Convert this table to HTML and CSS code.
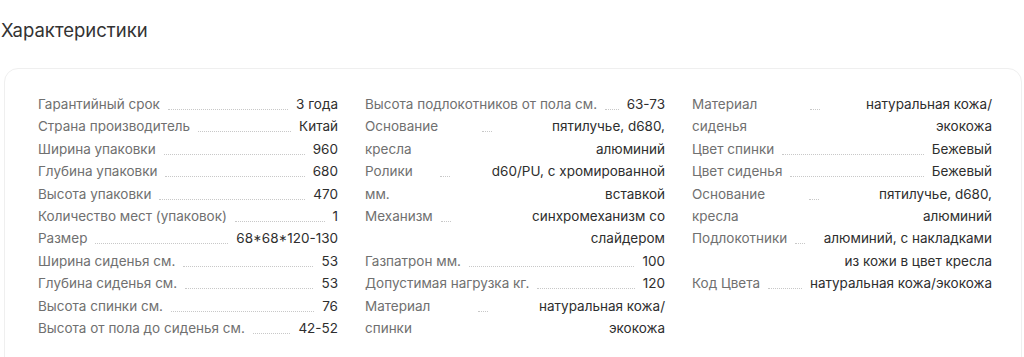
FILE: index.html
```html
<!DOCTYPE html>
<html lang="ru">
<head>
<meta charset="utf-8">
<link rel="stylesheet" href="styles.css">
</head>
<body>
<div class="page">
  <h2 class="title">Характеристики</h2>
  <div class="card">
    <div class="col">
      <div class="row"><span class="name">Гарантийный срок</span><span class="dots"></span><span class="val">3 года</span></div>
      <div class="row"><span class="name">Страна производитель</span><span class="dots"></span><span class="val">Китай</span></div>
      <div class="row"><span class="name">Ширина упаковки</span><span class="dots"></span><span class="val">960</span></div>
      <div class="row"><span class="name">Глубина упаковки</span><span class="dots"></span><span class="val">680</span></div>
      <div class="row"><span class="name">Высота упаковки</span><span class="dots"></span><span class="val">470</span></div>
      <div class="row"><span class="name">Количество мест (упаковок)</span><span class="dots"></span><span class="val">1</span></div>
      <div class="row"><span class="name">Размер</span><span class="dots"></span><span class="val">68*68*120-130</span></div>
      <div class="row"><span class="name">Ширина сиденья см.</span><span class="dots"></span><span class="val">53</span></div>
      <div class="row"><span class="name">Глубина сиденья см.</span><span class="dots"></span><span class="val">53</span></div>
      <div class="row"><span class="name">Высота спинки см.</span><span class="dots"></span><span class="val">76</span></div>
      <div class="row"><span class="name">Высота от пола до сиденья см.</span><span class="dots"></span><span class="val">42-52</span></div>
    </div>
    <div class="col">
      <div class="row"><span class="name">Высота подлокотников от пола см.</span><span class="dots"></span><span class="val">63-73</span></div>
      <div class="row"><span class="name">Основание кресла</span><span class="dots"></span><span class="val">пятилучье, d680, алюминий</span></div>
      <div class="row"><span class="name">Ролики мм.</span><span class="dots"></span><span class="val">d60/PU, с хромированной вставкой</span></div>
      <div class="row"><span class="name">Механизм</span><span class="dots"></span><span class="val">синхромеханизм со слайдером</span></div>
      <div class="row"><span class="name">Газпатрон мм.</span><span class="dots"></span><span class="val">100</span></div>
      <div class="row"><span class="name">Допустимая нагрузка кг.</span><span class="dots"></span><span class="val">120</span></div>
      <div class="row"><span class="name">Материал спинки</span><span class="dots"></span><span class="val">натуральная кожа/ экокожа</span></div>
    </div>
    <div class="col">
      <div class="row"><span class="name">Материал сиденья</span><span class="dots"></span><span class="val">натуральная кожа/ экокожа</span></div>
      <div class="row"><span class="name">Цвет спинки</span><span class="dots"></span><span class="val">Бежевый</span></div>
      <div class="row"><span class="name">Цвет сиденья</span><span class="dots"></span><span class="val">Бежевый</span></div>
      <div class="row"><span class="name">Основание кресла</span><span class="dots"></span><span class="val">пятилучье, d680, алюминий</span></div>
      <div class="row"><span class="name">Подлокотники</span><span class="dots"></span><span class="val">алюминий, с накладками из кожи в цвет кресла</span></div>
      <div class="row"><span class="name">Код Цвета</span><span class="dots"></span><span class="val">натуральная кожа/экокожа</span></div>
    </div>
  </div>
</div>
</body>
</html>
```
FILE: styles.css
```css
html, body {
  margin: 0;
  padding: 0;
  background: #ffffff;
}
.page {
  padding: 0 0 0 4px;
  font-family: Inter, "Noto Sans", sans-serif;
  color: #333333;
  height: 357px;
  overflow: hidden;
}
.title {
  margin: 0;
  padding: 19px 0 0 0;
  margin-left: -3px;
  font-size: 18.5px;
  font-weight: 400;
  line-height: 22px;
  color: #333333;
}
.card {
  margin-top: 27px;
  width: 1018px;
  box-sizing: border-box;
  border: 1px solid #efefef;
  border-radius: 14px;
  padding: 24px 0 20px 33px;
  display: grid;
  grid-template-columns: 300px 300px 300px;
  column-gap: 27px;
  align-items: start;
  min-height: 320px;
}
.col {
  display: flex;
  flex-direction: column;
}
.row {
  display: flex;
  align-items: flex-start;
  font-size: 13.5px;
  line-height: 22.4px;
}
.name {
  flex: 0 1 auto;
  color: #707070;
}
.val {
  flex: 0 1 auto;
  text-align: right;
  color: #2e2e2e;
}
.dots {
  flex: 1 0 10px;
  height: 16px;
  margin: 0 8px;
  border-bottom: 1px dotted #c8c8c8;
}
```
